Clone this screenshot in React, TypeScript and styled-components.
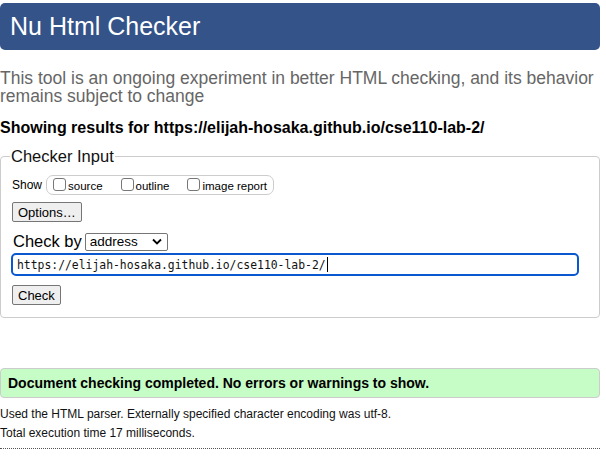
import React from "react";
import styled, { createGlobalStyle } from "styled-components";

const Global = createGlobalStyle`
  html, body { margin: 0; padding: 0; background: #fff; }
  body { font-family: "Liberation Sans", Arial, sans-serif; color: #000; width: 606px; overflow: hidden; }
`;

const Page = styled.div`
  width: 600px;
  padding-top: 3px;
`;

const Header = styled.h1`
  margin: 0;
  height: 47px;
  background: #335389;
  color: #fff;
  border-radius: 5px;
  font-size: 25px;
  font-weight: normal;
  line-height: 47px;
  padding-left: 10px;
  box-sizing: border-box;
`;

const Intro = styled.p`
  margin: 19px 0 0 0;
  color: #666;
  font-size: 17.5px;
  line-height: 18px;
`;

const Results = styled.p`
  margin: 13px 0 0 0;
  font-weight: bold;
  font-size: 16px;
  line-height: 19px;
`;

const Field = styled.fieldset`
  margin: 10px 0 0 0;
  padding: 8px 10px 12px 10px;
  border: 1px solid #ccc;
  border-radius: 4px;
  min-width: 0;
`;

const Legend = styled.legend`
  font-size: 16.5px;
  padding: 0 1px;
  margin-left: -1px;
  color: #111;
`;

const ShowRow = styled.div`
  display: flex;
  align-items: center;
  gap: 4px;
  font-size: 12px;
  margin-left: 1px;
  height: 22px;
`;

const ShowBox = styled.div`
  display: flex;
  align-items: center;
  border: 1px solid #ccc;
  border-radius: 7px;
  height: 18px;
  padding: 0 6px 0 6px;
`;

const Opt = styled.label<{ $gap: number }>`
  display: flex;
  align-items: center;
  margin-right: ${(p) => p.$gap}px;
  font-size: 11.5px;
  padding-top: 1px;
`;

const Box = styled.span`
  display: inline-block;
  width: 11px;
  height: 11px;
  border: 1px solid #777;
  border-radius: 3px;
  background: #fff;
  margin-right: 2px;
  margin-top: -3px;
`;

const Btn = styled.button`
  font-family: "Liberation Sans", Arial, sans-serif;
  font-size: 13px;
  background: #efefef;
  border: 1px solid #767676;
  border-radius: 2px;
  padding: 0 5px;
  height: 20px;
  color: #000;
`;

const OptionsBtn = styled(Btn)`
  margin-top: 6px;
  margin-left: 1px;
  display: block;
`;

const CheckByRow = styled.div`
  display: flex;
  align-items: center;
  margin-top: 10px;
  margin-left: 2px;
  font-size: 16.5px;
  gap: 3px;
`;

const Select = styled.div`
  display: flex;
  align-items: center;
  justify-content: space-between;
  width: 83px;
  height: 18px;
  border: 1px solid #767676;
  border-radius: 2px;
  box-sizing: border-box;
  padding: 0 5px 0 4px;
  font-size: 13.5px;
  background: #fff;
`;

const UrlInput = styled.div`
  margin-top: 2px;
  width: 568px;
  height: 23px;
  box-sizing: border-box;
  border: 2px solid #0b57d0;
  border-radius: 5px;
  font-family: "DejaVu Sans Mono", "Liberation Mono", monospace;
  font-size: 11.4px;
  display: flex;
  align-items: center;
  padding-left: 4px;
  color: #111;
`;

const Caret = styled.span`
  display: inline-block;
  width: 1px;
  height: 15px;
  background: #000;
  margin-left: 1px;
`;

const CheckBtn = styled(Btn)`
  margin-top: 9px;
  margin-left: 1px;
  display: block;
`;

const Success = styled.div`
  margin-top: 50px;
  height: 30px;
  box-sizing: border-box;
  background: #c6fcc6;
  border: 1px solid #ccc;
  border-radius: 4px;
  font-weight: bold;
  font-size: 14px;
  display: flex;
  align-items: center;
  padding-left: 7px;
`;

const Small = styled.p<{ $mt: number }>`
  margin: ${(p) => p.$mt}px 0 0 0;
  font-size: 12px;
  line-height: 14px;
  color: #111;
`;

const Dotted = styled.div`
  margin-top: 8px;
  border-top: 1px dotted #555;
`;

export default function App() {
  return (
    <>
      <Global />
      <Page>
        <Header>Nu Html Checker</Header>
        <Intro>
          This tool is an ongoing experiment in better HTML checking, and its behavior
          remains subject to change
        </Intro>
        <Results>Showing results for https://elijah-hosaka.github.io/cse110-lab-2/</Results>
        <Field>
          <Legend>Checker Input</Legend>
          <ShowRow>
            <span>Show</span>
            <ShowBox>
              <Opt $gap={18}><Box />source</Opt>
              <Opt $gap={18}><Box />outline</Opt>
              <Opt $gap={0}><Box />image report</Opt>
            </ShowBox>
          </ShowRow>
          <OptionsBtn>Options…</OptionsBtn>
          <CheckByRow>
            <span>Check by</span>
            <Select>
              <span>address</span>
              <svg width="10" height="7" viewBox="0 0 10 7">
                <path d="M1 1.5 L5 5.5 L9 1.5" fill="none" stroke="#000" strokeWidth="1.8" />
              </svg>
            </Select>
          </CheckByRow>
          <UrlInput>
            https://elijah-hosaka.github.io/cse110-lab-2/<Caret />
          </UrlInput>
          <CheckBtn>Check</CheckBtn>
        </Field>
        <Success>Document checking completed. No errors or warnings to show.</Success>
        <Small $mt={9}>Used the HTML parser. Externally specified character encoding was utf-8.</Small>
        <Small $mt={5}>Total execution time 17 milliseconds.</Small>
        <Dotted />
      </Page>
    </>
  );
}
